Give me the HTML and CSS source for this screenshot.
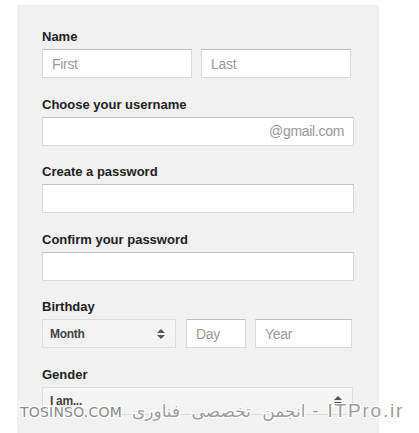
FILE: index.html
```html
<!DOCTYPE html>
<html>
<head>
<meta charset="utf-8">
<link rel="stylesheet" href="styles.css">
</head>
<body>
<div class="panel">
  <div class="field">
    <div class="label">Name</div>
    <div class="row">
      <div class="input w150"><span class="ph">First</span></div>
      <div class="input w150"><span class="ph">Last</span></div>
    </div>
  </div>
  <div class="field">
    <div class="label">Choose your username</div>
    <div class="input wfull right"><span class="ph">@gmail.com</span></div>
  </div>
  <div class="field">
    <div class="label">Create a password</div>
    <div class="input wfull"></div>
  </div>
  <div class="field">
    <div class="label">Confirm your password</div>
    <div class="input wfull"></div>
  </div>
  <div class="field">
    <div class="label">Birthday</div>
    <div class="row bday">
      <div class="select month"><span>Month</span><span class="arrows"><i class="up"></i><i class="down"></i></span></div>
      <div class="input day"><span class="ph">Day</span></div>
      <div class="input year"><span class="ph">Year</span></div>
    </div>
  </div>
  <div class="field">
    <div class="label">Gender</div>
    <div class="select gender"><span>I am...</span><span class="arrows"><i class="up"></i><i class="down"></i></span></div>
  </div>
</div>
<div class="watermark">
  <span class="tos">TOSINSO.COM</span>
  <span class="fa" dir="rtl">انجمن تخصصی فناوری</span>
  <span class="dash">-</span>
  <span class="itp">ITPro.ir</span>
</div>
</body>
</html>
```
FILE: styles.css
```css
html, body {
  margin: 0;
  padding: 0;
  background: #ffffff;
  height: 433px;
  overflow: hidden;
}
body {
  font-family: "Liberation Sans", Arial, sans-serif;
  position: relative;
}
.panel {
  margin-left: 17px;
  margin-top: 5px;
  width: 362px;
  height: 428px;
  box-sizing: border-box;
  background: #f1f1f1;
  padding: 24px 0 0 25px;
}
.field {
  margin-bottom: 18.6px;
}
.label {
  font-size: 13px;
  font-weight: bold;
  color: #222;
  line-height: 16px;
  margin-bottom: 4px;
}
.row {
  display: flex;
  gap: 9px;
}
.input {
  box-sizing: border-box;
  height: 29px;
  background: #fff;
  border: 1px solid #d9d9d9;
  border-top-color: #c0c0c0;
  display: flex;
  align-items: center;
  padding: 0 9px;
  font-size: 14px;
  letter-spacing: -0.3px;
}
.ph {
  color: #999;
}
.w150 { width: 150px; }
.wfull { width: 312px; }
.right { justify-content: flex-end; }
.bday { gap: 0; }
.select {
  box-sizing: border-box;
  height: 29px;
  background: linear-gradient(#f6f6f6, #f2f2f2);
  border: 1px solid #dcdcdc;
  display: flex;
  align-items: center;
  justify-content: space-between;
  padding: 0 7px 0 7px;
  font-size: 12px;
  font-weight: bold;
  letter-spacing: -0.3px;
  color: #444;
}
.month { width: 134px; margin-right: 10px; }
.day { width: 60px; margin-right: 9px; }
.year { width: 97px; }
.gender { width: 311px; height: 28px; }
.arrows {
  display: flex;
  flex-direction: column;
  gap: 2px;
  margin-right: 3px;
}
.arrows i {
  display: block;
  width: 0;
  height: 0;
  border-left: 4px solid transparent;
  border-right: 4px solid transparent;
}
.arrows .up { border-bottom: 4px solid #555; }
.arrows .down { border-top: 4px solid #555; }
.watermark {
  position: absolute;
  left: 20px;
  top: 400px;
  display: flex;
  align-items: baseline;
  color: #9c9c9c;
  text-shadow: 1px 0 0 #fff, -1px 0 0 #fff, 0 1px 0 #fff, 0 -1px 0 #fff, 1px 1px 0 #fff, -1px -1px 0 #fff, 1px -1px 0 #fff, -1px 1px 0 #fff;
  white-space: nowrap;
}
.tos {
  font-family: "DejaVu Sans", sans-serif;
  font-size: 14px;
  letter-spacing: 0.2px;
  color: #8a8a8a;
  margin-right: 10px;
}
.fa {
  font-family: "DejaVu Sans", sans-serif;
  font-size: 17px;
  word-spacing: 6px;
  margin-right: 7px;
}
.dash {
  font-family: "Liberation Sans", sans-serif;
  font-size: 18px;
  margin-right: 9px;
}
.itp {
  font-family: "Liberation Sans", sans-serif;
  font-size: 19px;
  letter-spacing: 1.8px;
}
```
